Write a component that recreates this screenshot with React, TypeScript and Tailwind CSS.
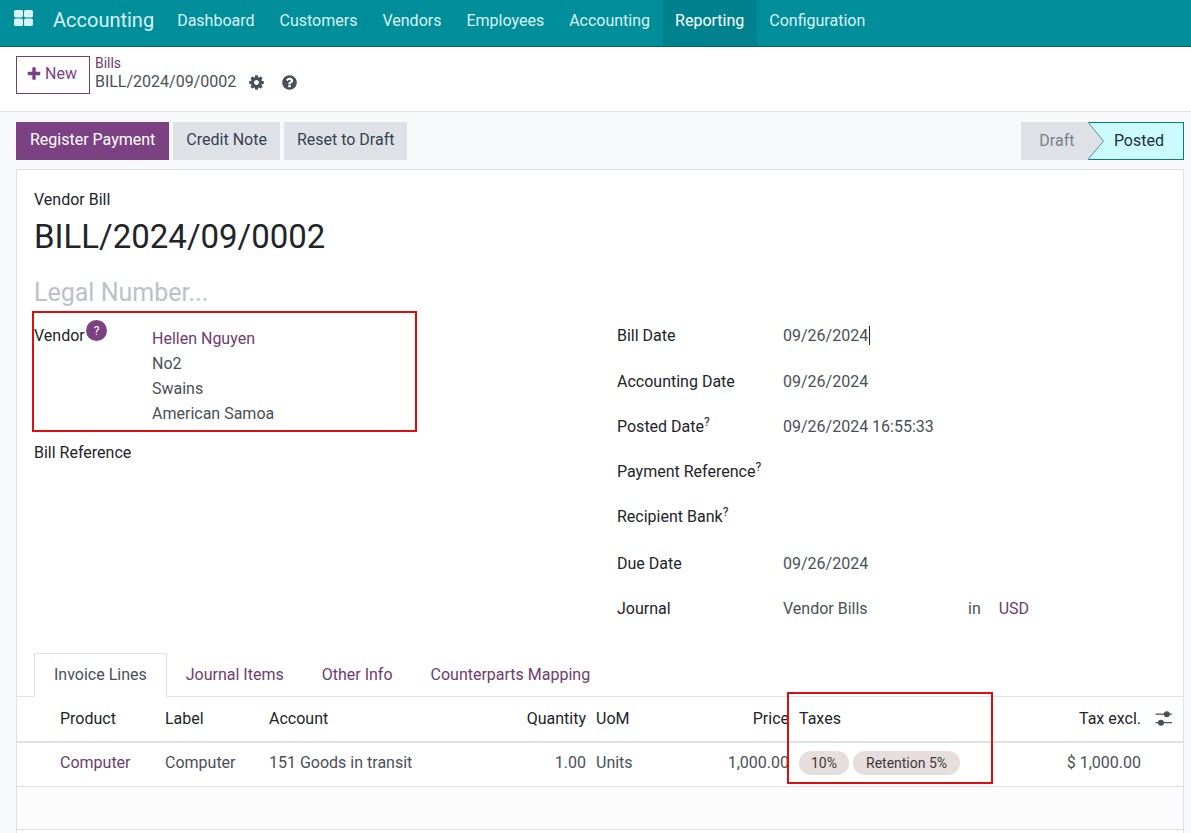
import type { ReactNode } from 'react';
import clsx from 'clsx';

const menuItems = [
  'Dashboard',
  'Customers',
  'Vendors',
  'Employees',
  'Accounting',
  'Reporting',
  'Configuration',
];

const tabs = ['Invoice Lines', 'Journal Items', 'Other Info', 'Counterparts Mapping'];

function FaIcon({ d, className }: { d: string; className?: string }) {
  return (
    <svg
      viewBox="0 0 1792 1792"
      fill="currentColor"
      aria-hidden="true"
      className={clsx('shrink-0', className)}
    >
      <path d={d} />
    </svg>
  );
}

const plusPath =
  'M1600 736v192q0 40-28 68t-68 28h-416v416q0 40-28 68t-68 28h-192q-40 0-68-28t-28-68v-416h-416q-40 0-68-28t-28-68v-192q0-40 28-68t68-28h416v-416q0-40 28-68t68-28h192q40 0 68 28t28 68v416h416q40 0 68 28t28 68z';

const cogPath =
  'M1152 896q0-106-75-181t-181-75-181 75-75 181 75 181 181 75 181-75 75-181zm512-109v222q0 12-8 23t-20 13l-185 28q-19 54-39 91 35 50 107 138 10 12 10 25t-9 23q-27 37-99 108t-94 71q-12 0-26-9l-138-108q-44 23-91 38-16 136-29 186-7 28-36 28h-222q-14 0-24.5-8.5t-11.5-21.5l-28-184q-49-16-90-37l-141 107q-10 9-25 9-14 0-25-11-126-114-165-168-7-10-7-23 0-12 8-23 15-21 51-66.5t54-70.5q-27-50-41-99l-183-27q-13-2-21-12.5t-8-23.5v-222q0-12 8-23t19-13l186-28q14-46 39-92-40-57-107-138-10-12-10-24 0-10 9-23 26-36 98.5-107.5t94.5-71.5q13 0 26 10l138 107q44-23 91-38 16-136 29-186 7-28 36-28h222q14 0 24.5 8.5t11.5 21.5l28 184q49 16 90 37l142-107q9-9 24-9 13 0 25 10 129 119 165 170 7 8 7 22 0 12-8 23-15 21-51 66.5t-54 70.5q26 50 41 98l183 28q13 2 21 12.5t8 23.5z';

const helpPath =
  'M1024 1376v-192q0-14-9-23t-23-9h-192q-14 0-23 9t-9 23v192q0 14 9 23t23 9h192q14 0 23-9t9-23zm256-672q0-88-55.5-163t-138.5-116-170-41q-243 0-371 213-15 24 8 42l132 100q7 6 19 6 16 0 25-12 53-68 86-92 34-24 86-24 48 0 85.5 26t37.5 59q0 38-20 61t-68 45q-63 28-115.5 86.5t-52.5 125.5v36q0 14 9 23t23 9h192q14 0 23-9t9-23q0-19 21.5-49.5t54.5-49.5q32-18 49-28.5t46-35 44.5-48 28-60.5 12.5-81zm384 192q0 209-103 385.5t-279.5 279.5-385.5 103-385.5-103-279.5-279.5-103-385.5 103-385.5 279.5-279.5 385.5-103 385.5 103 279.5 279.5 103 385.5z';

function Navbar() {
  return (
    <header className="flex h-[47px] items-stretch border-b border-[#00626b] bg-[#018e9b] pl-[14px] text-[#d8f3f5]">
      <button type="button" aria-label="Apps" className="flex pt-[10px]">
        <svg viewBox="0 0 19 16" fill="currentColor" className="h-4 w-[19px]">
          <rect x="0" y="0" width="9" height="7.4" rx="1.6" />
          <rect x="10" y="0" width="9" height="7.4" rx="1.6" />
          <rect x="0" y="8.6" width="9" height="7.4" rx="1.6" />
          <rect x="10" y="8.6" width="9" height="7.4" rx="1.6" />
        </svg>
      </button>
      <a href="#accounting" className="mr-[11px] ml-[20px] text-xl leading-10">
        Accounting
      </a>
      <nav className="flex">
        {menuItems.map((item) => (
          <a
            key={item}
            href={`#${item.toLowerCase()}`}
            className={clsx(
              'pr-[13px] pl-3 leading-[42px]',
              item === 'Reporting' && 'bg-[#00828e] text-white',
            )}
          >
            {item}
          </a>
        ))}
      </nav>
    </header>
  );
}

function ControlPanel() {
  return (
    <div className="flex h-[65px] items-start gap-[5px] border-b border-[#dee2e6] bg-white pt-[9px] pl-4">
      <button
        type="button"
        className="flex h-[38px] items-center gap-[3px] border border-[#71406f] pr-3 pb-[3px] pl-[9px] text-[#7c4182]"
      >
        <FaIcon d={plusPath} className="size-4" />
        New
      </button>
      <div>
        <a href="#bills" className="block text-sm leading-[14px] text-[#6d3c70]">
          Bills
        </a>
        <div className="flex items-center leading-6 text-[#495057]">
          <span>BILL/2024/09/0002</span>
          <button type="button" aria-label="Actions" className="ml-3">
            <FaIcon d={cogPath} className="size-[17px]" />
          </button>
          <button type="button" aria-label="Help" className="ml-4">
            <FaIcon d={helpPath} className="size-[17px]" />
          </button>
        </div>
      </div>
    </div>
  );
}

function StatusBar() {
  return (
    <div className="flex h-[38px] justify-between">
      <div className="flex gap-1">
        <button type="button" className="bg-[#7c4182] px-[14px] pb-[3px] text-white">
          Register Payment
        </button>
        <button type="button" className="bg-[#dee2e6] px-[13px] pb-[3px] text-[#374151]">
          Credit Note
        </button>
        <button type="button" className="bg-[#dee2e6] px-[13px] pb-[3px] text-[#374151]">
          Reset to Draft
        </button>
      </div>
      <div className="flex">
        <button type="button" className="w-[67px] bg-[#dee2e6] pl-[5px] text-[#7a8087]">
          Draft
        </button>
        <button
          type="button"
          className="flex items-stretch border border-l-0 border-[#017e84] bg-[#ccfbff] pr-[19px] text-[#212f36]"
        >
          {/* arrow head of the previous stage */}
          <svg viewBox="0 0 16 38" className="-my-px mr-[10px] h-[38px] w-4">
            <path d="M0 0L16 19L0 38z" fill="#dee2e6" />
            <path d="M0 0.5L15.5 19L0 37.5" fill="none" stroke="#4a9aa3" />
          </svg>
          <span className="self-center">Posted</span>
        </button>
      </div>
    </div>
  );
}

function Field({
  id,
  label,
  value = '',
  help,
  className,
  children,
}: {
  id: string;
  label: string;
  value?: string;
  help?: boolean;
  className: string;
  children?: ReactNode;
}) {
  return (
    <div className={clsx('flex items-start leading-6', className)}>
      <label htmlFor={id} className="w-[166px] shrink-0 text-[#212529]">
        {label}
        {help && <sup className="text-xs leading-none">?</sup>}
      </label>
      <div className="relative flex min-w-0 flex-1">
        <input
          id={id}
          readOnly
          defaultValue={value}
          className="w-[185px] bg-transparent text-[#495057] outline-none"
        />
        {children}
      </div>
    </div>
  );
}

function BillForm() {
  return (
    <div className="grid grid-cols-2 gap-[34px]">
      <div>
        <div className="relative flex">
          <div className="relative w-[118px] shrink-0 pt-3 leading-6 text-[#212529]">
            Vendor
            <span className="absolute top-[8px] left-[52px] flex size-[21px] items-center justify-center rounded-full bg-[#7c4182] text-xs text-white">
              ?
            </span>
          </div>
          <div className="pt-[14px] text-[#495057]">
            <a href="#vendor" className="block leading-[25px] text-[#6d3c70]">
              Hellen Nguyen
            </a>
            <p className="leading-[25px]">No2</p>
            <p className="leading-[25px]">Swains</p>
            <p className="leading-[25px]">American Samoa</p>
          </div>
          <div className="pointer-events-none absolute -top-px -left-[2px] h-[121px] w-[385px] border-2 border-[#dc0f0f]" />
        </div>
        <div className="mt-[15px] flex leading-6">
          <label htmlFor="bill_reference" className="w-[118px] shrink-0 text-[#212529]">
            Bill Reference
          </label>
          <input id="bill_reference" readOnly className="min-w-0 flex-1 outline-none" />
        </div>
      </div>
      <div className="pt-3">
        <Field id="bill_date" label="Bill Date" value="09/26/2024" className="h-[46px]">
          <span className="absolute top-[2px] left-[86px] h-[19px] w-px bg-[#212529]" />
        </Field>
        <Field id="date" label="Accounting Date" value="09/26/2024" className="h-[45px]" />
        <Field
          id="posted_date"
          label="Posted Date"
          value="09/26/2024 16:55:33"
          help
          className="h-[45px]"
        />
        <Field id="payment_reference" label="Payment Reference" help className="h-[45px]" />
        <Field id="bank" label="Recipient Bank" help className="h-[47px]" />
        <Field id="due_date" label="Due Date" value="09/26/2024" className="h-[45px]" />
        <Field id="journal" label="Journal" value="Vendor Bills" className="h-[45px]">
          <span className="text-[#495057]">in</span>
          <a href="#currency" className="ml-[18px] text-[#6d3c70]">
            USD
          </a>
        </Field>
      </div>
    </div>
  );
}

function InvoiceLines() {
  return (
    <table className="w-full table-fixed border-separate border-spacing-0 leading-6">
      <colgroup>
        <col className="w-[38px]" />
        <col className="w-[105px]" />
        <col className="w-[104px]" />
        <col />
        <col className="w-[104px]" />
        <col className="w-[99px]" />
        <col className="w-[104px]" />
        <col className="w-[206px]" />
        <col className="w-[146px]" />
        <col className="w-[37px]" />
      </colgroup>
      <thead>
        <tr className="h-[46px] text-left text-[#212529] [&>th]:border-b-2 [&>th]:border-[#dee2e6] [&>th]:px-[5px] [&>th]:font-normal">
          <th />
          <th>Product</th>
          <th>Label</th>
          <th>Account</th>
          <th className="text-right">Quantity</th>
          <th>UoM</th>
          <th className="text-right">Price</th>
          <th className="relative">
            Taxes
            <div className="pointer-events-none absolute -top-[5px] -left-[7px] h-[92px] w-[206px] border-2 border-[#dc0f0f]" />
          </th>
          <th className="text-right">Tax excl.</th>
          <th>
            <button type="button" aria-label="Optional columns" className="flex pl-1">
              <svg viewBox="0 0 18 16" className="h-4 w-[18px] text-[#495057]">
                <path d="M0.5 3.2H17M0.5 11.7H17" stroke="currentColor" strokeWidth="1.3" />
                <circle cx="11.8" cy="3.2" r="3" fill="currentColor" />
                <circle cx="6" cy="11.7" r="3" fill="currentColor" />
              </svg>
            </button>
          </th>
        </tr>
      </thead>
      <tbody>
        <tr className="h-[44px] text-[#495057] [&>td]:border-b [&>td]:border-[#dee2e6] [&>td]:px-[5px] [&>td]:pb-[3px]">
          <td />
          <td>
            <a href="#computer" className="text-[#6d3c70]">
              Computer
            </a>
          </td>
          <td>Computer</td>
          <td>151 Goods in transit</td>
          <td className="text-right">1.00</td>
          <td>Units</td>
          <td className="text-right">1,000.00</td>
          <td>
            <div className="flex gap-1 text-sm leading-6 text-[#3d3a3c]">
              <span className="rounded-full bg-[#e6dddd] px-3">10%</span>
              <span className="rounded-full bg-[#e6dddd] px-[13px]">Retention 5%</span>
            </div>
          </td>
          <td className="text-right">$ 1,000.00</td>
          <td />
        </tr>
        <tr className="h-[43px]">
          <td colSpan={10} className="border-b border-[#dee2e6] bg-[#fcfcfc]" />
        </tr>
      </tbody>
    </table>
  );
}

export default function App() {
  return (
    <div className="flex min-h-screen flex-col bg-[#f8f9fa] font-[Roboto,sans-serif] text-base">
      <Navbar />
      <ControlPanel />
      <main className="flex flex-1 flex-col pt-[10px] pr-[7px] pl-4">
        <StatusBar />
        <div className="mt-[9px] flex-1 border border-b-0 border-[#dee2e6] bg-white">
          <div className="px-[17px] pt-[18px]">
            <p className="leading-6 text-[#212529]">Vendor Bill</p>
            <h1 className="mt-[5px] text-[33px] leading-[40px] text-[#212529]">
              BILL/2024/09/0002
            </h1>
            <input
              type="text"
              aria-label="Legal Number"
              placeholder="Legal Number..."
              className="mt-[18px] mb-px block h-[36px] w-full text-[25px] outline-none placeholder:text-[#bcc1c9]"
            />
            <BillForm />
          </div>
          <div role="tablist" className="mt-[11px] flex border-b border-[#dee2e6] px-[17px]">
            {tabs.map((tab, i) => (
              <button
                key={tab}
                type="button"
                role="tab"
                aria-selected={i === 0}
                className={clsx(
                  '-mb-px h-[44px] border',
                  i === 0
                    ? 'border-[#dee2e6] border-b-white bg-white px-[19px] text-[#495057]'
                    : 'border-transparent px-[18px] text-[#6d3c70]',
                )}
              >
                {tab}
              </button>
            ))}
          </div>
          <InvoiceLines />
        </div>
      </main>
    </div>
  );
}
